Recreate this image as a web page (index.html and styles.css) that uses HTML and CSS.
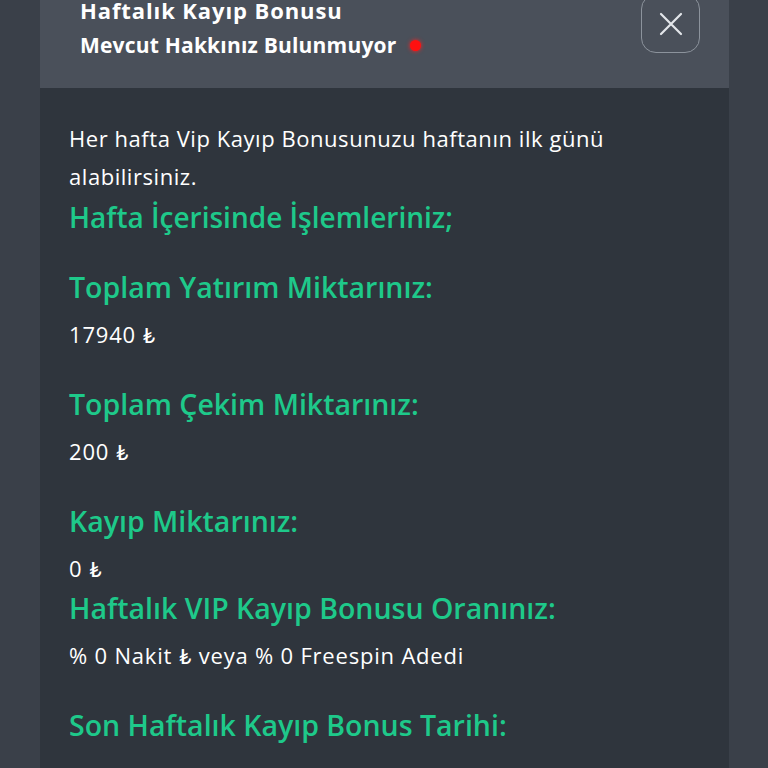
FILE: index.html
```html
<!DOCTYPE html>
<html lang="tr">
<head>
<meta charset="utf-8">
<link rel="stylesheet" href="styles.css">
</head>
<body>
<div class="page">
  <div class="modal">
    <header class="modal-head">
      <div class="head-text">
        <div class="title">Haftalık Kayıp Bonusu</div>
        <div class="subtitle">Mevcut Hakkınız Bulunmuyor <span class="dot"></span></div>
      </div>
      <button class="close" aria-label="Kapat">
        <svg width="26" height="26" viewBox="0 0 26 26"><path d="M3 3 L23 23 M23 3 L3 23" stroke="#e3e6ea" stroke-width="2.2" stroke-linecap="round" fill="none"/></svg>
      </button>
    </header>
    <section class="modal-body">
      <p class="intro">Her hafta Vip Kayıp Bonusunuzu haftanın ilk günü alabilirsiniz.</p>
      <h2 class="section-title">Hafta İçerisinde İşlemleriniz;</h2>
      <div class="item">
        <h3 class="label">Toplam Yatırım Miktarınız:</h3>
        <p class="value">17940 ₺</p>
      </div>
      <div class="item">
        <h3 class="label">Toplam Çekim Miktarınız:</h3>
        <p class="value">200 ₺</p>
      </div>
      <div class="item tight">
        <h3 class="label">Kayıp Miktarınız:</h3>
        <p class="value">0 ₺</p>
      </div>
      <div class="item">
        <h3 class="label">Haftalık VIP Kayıp Bonusu Oranınız:</h3>
        <p class="value">% 0 Nakit ₺ veya % 0 Freespin Adedi</p>
      </div>
      <div class="item">
        <h3 class="label">Son Haftalık Kayıp Bonus Tarihi:</h3>
      </div>
    </section>
  </div>
</div>
</body>
</html>
```
FILE: styles.css
```css
html, body {
  margin: 0;
  padding: 0;
  height: 768px;
  overflow: hidden;
  background: #3a4049;
  font-family: "Open Sans", "Lato", sans-serif;
}
.page {
  padding: 0 39px 0 40px;
}
.modal {
  background: #2f353d;
  min-height: 768px;
}
.modal-head {
  background: #4a505a;
  height: 88px;
  display: flex;
  justify-content: space-between;
  align-items: flex-start;
  padding: 0 29px 0 40px;
  box-sizing: border-box;
}
.head-text {
  margin-top: -8px;
}
.title {
  color: #ffffff;
  font-size: 22px;
  font-weight: 700;
  letter-spacing: 0.9px;
  line-height: 36px;
}
.subtitle {
  color: #ffffff;
  font-size: 21px;
  font-weight: 700;
  letter-spacing: 0.2px;
  line-height: 34px;
  display: flex;
  align-items: center;
  gap: 14px;
}
.dot {
  width: 11px;
  height: 11px;
  border-radius: 50%;
  background: #ff1010;
  box-shadow: 0 0 4px #ff2020;
}
.close {
  width: 59px;
  height: 59px;
  margin-top: -6px;
  border: 1.5px solid #8c939c;
  border-radius: 15px;
  background: transparent;
  display: flex;
  align-items: center;
  justify-content: center;
  padding: 0;
}
.modal-body {
  padding: 31px 29px 0 29px;
}
.intro {
  margin: 0;
  color: #ffffff;
  font-size: 22px;
  letter-spacing: 0.55px;
  line-height: 38px;
}
.section-title {
  margin: 2px 0 0;
  color: #1ec98a;
  font-size: 28px;
  font-weight: 600;
  line-height: 40px;
}
.item {
  margin-top: 30px;
}
.label {
  margin: 0;
  color: #1ec98a;
  font-size: 28.5px;
  font-weight: 600;
  line-height: 40px;
}
.value {
  margin: 7px 0 0;
  color: #ffffff;
  font-size: 22px;
  letter-spacing: 0.8px;
  line-height: 40px;
}
.tight + .item {
  margin-top: 0;
}
```
